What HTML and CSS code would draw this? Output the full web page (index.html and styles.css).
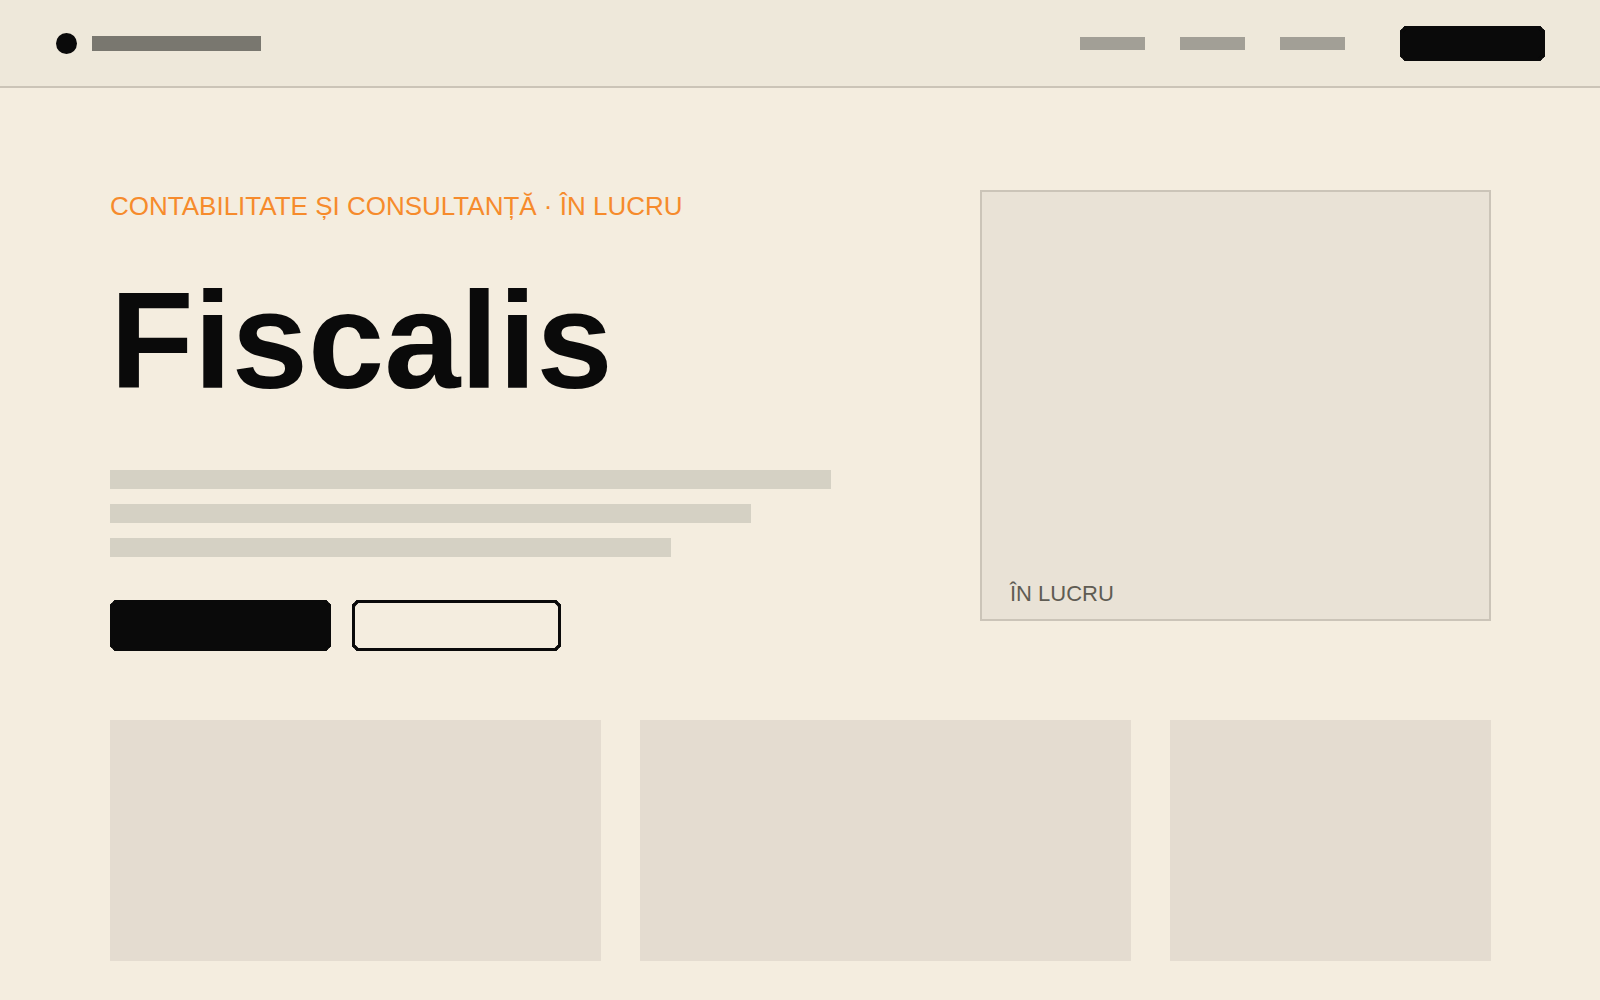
FILE: index.html
```html
<!DOCTYPE html>
<html lang="ro">
<head>
    <meta charset="UTF-8">
    <meta name="viewport" content="width=device-width, initial-scale=1.0">
    <title>Fiscalis</title>
    <link rel="stylesheet" href="styles.css">
</head>
<body>
    <header class="top-bar">
        <a class="brand" href="#" aria-label="Fiscalis">
            <span class="brand-dot"></span>
            <span class="brand-name"></span>
        </a>
        <nav class="nav">
            <a class="nav-link" href="#servicii" aria-label="Servicii"></a>
            <a class="nav-link" href="#despre" aria-label="Despre"></a>
            <a class="nav-link" href="#contact" aria-label="Contact"></a>
            <button class="button nav-button" type="button" aria-label="Contact"></button>
        </nav>
    </header>
    <main class="container">
        <section class="hero">
            <div class="hero-text">
                <p class="eyebrow">CONTABILITATE ȘI CONSULTANȚĂ · ÎN LUCRU</p>
                <h1>Fiscalis</h1>
                <div class="lines">
                    <div class="line"></div>
                    <div class="line line-medium"></div>
                    <div class="line line-short"></div>
                </div>
                <div class="actions">
                    <button class="button button-primary" type="button" aria-label="Începe"></button>
                    <button class="button button-outline" type="button" aria-label="Detalii"></button>
                </div>
            </div>
            <div class="preview">ÎN LUCRU</div>
        </section>
        <section class="cards">
            <div class="card"></div>
            <div class="card"></div>
            <div class="card"></div>
        </section>
    </main>
</body>
</html>
```
FILE: styles.css
```css
* {
    box-sizing: border-box;
}

body {
    font-family: "Liberation Sans", Helvetica, Arial, sans-serif;
    margin: 0;
    min-height: 100vh;
    background: #f4eddf;
    color: #0a0a0a;
}

.top-bar {
    display: flex;
    justify-content: space-between;
    align-items: center;
    padding: 26px 55px 25px 56px;
    background: #eee8da;
    border-bottom: 2px solid #cbc4b7;
}

.brand {
    display: flex;
    align-items: center;
    gap: 15px;
}

.brand-dot {
    width: 21px;
    height: 21px;
    border-radius: 50%;
    background: #0a0a0a;
}

.brand-name {
    width: 169px;
    height: 15px;
    background: #79776f;
}

.nav {
    display: flex;
    align-items: center;
    gap: 35px;
}

.nav-link {
    width: 65px;
    height: 13px;
    background: #a29f96;
}

/* Buttons have cut corners where the browser supports it */
.button {
    padding: 0;
    border: 3px solid #0a0a0a;
    border-radius: 5px;
    corner-shape: bevel;
    background: #0a0a0a;
    cursor: pointer;
}

.nav-button {
    width: 145px;
    height: 35px;
    margin-left: 20px;
}

.container {
    padding: 102px 109px 39px 110px;
}

.hero {
    display: grid;
    grid-template-columns: 721fr 511fr;
    column-gap: 149px;
    align-items: start;
}

.eyebrow {
    margin: 0;
    font-size: 26px;
    line-height: 32px;
    color: #f68b2c;
}

h1 {
    margin: 39px 0 49px;
    font-size: 137px;
    line-height: 160px;
    font-weight: bold;
}

.lines {
    display: flex;
    flex-direction: column;
    gap: 15px;
}

.line {
    max-width: 100%;
    height: 19px;
    background: #d5d1c4;
}

.line-medium {
    width: 641px;
}

.line-short {
    width: 561px;
}

.actions {
    display: flex;
    gap: 21px;
    margin-top: 43px;
}

.button-primary {
    width: 221px;
    height: 51px;
}

.button-outline {
    width: 209px;
    height: 51px;
    background: transparent;
}

.preview {
    display: flex;
    align-items: flex-end;
    height: 431px;
    padding: 12px 28px;
    border: 2px solid #cbc4b8;
    background: #e9e2d6;
    color: #5f5c53;
    font-size: 22px;
    line-height: 26px;
}

.cards {
    display: grid;
    grid-template-columns: 491fr 491fr 321fr;
    gap: 39px;
    margin-top: 69px;
}

.card {
    height: 241px;
    background: #e4dcd0;
}

@media (max-width: 1000px) {
    .container {
        padding: 48px 24px;
    }

    .hero,
    .cards {
        grid-template-columns: 1fr;
        row-gap: 40px;
    }

    h1 {
        font-size: 80px;
        line-height: 96px;
    }
}
```
